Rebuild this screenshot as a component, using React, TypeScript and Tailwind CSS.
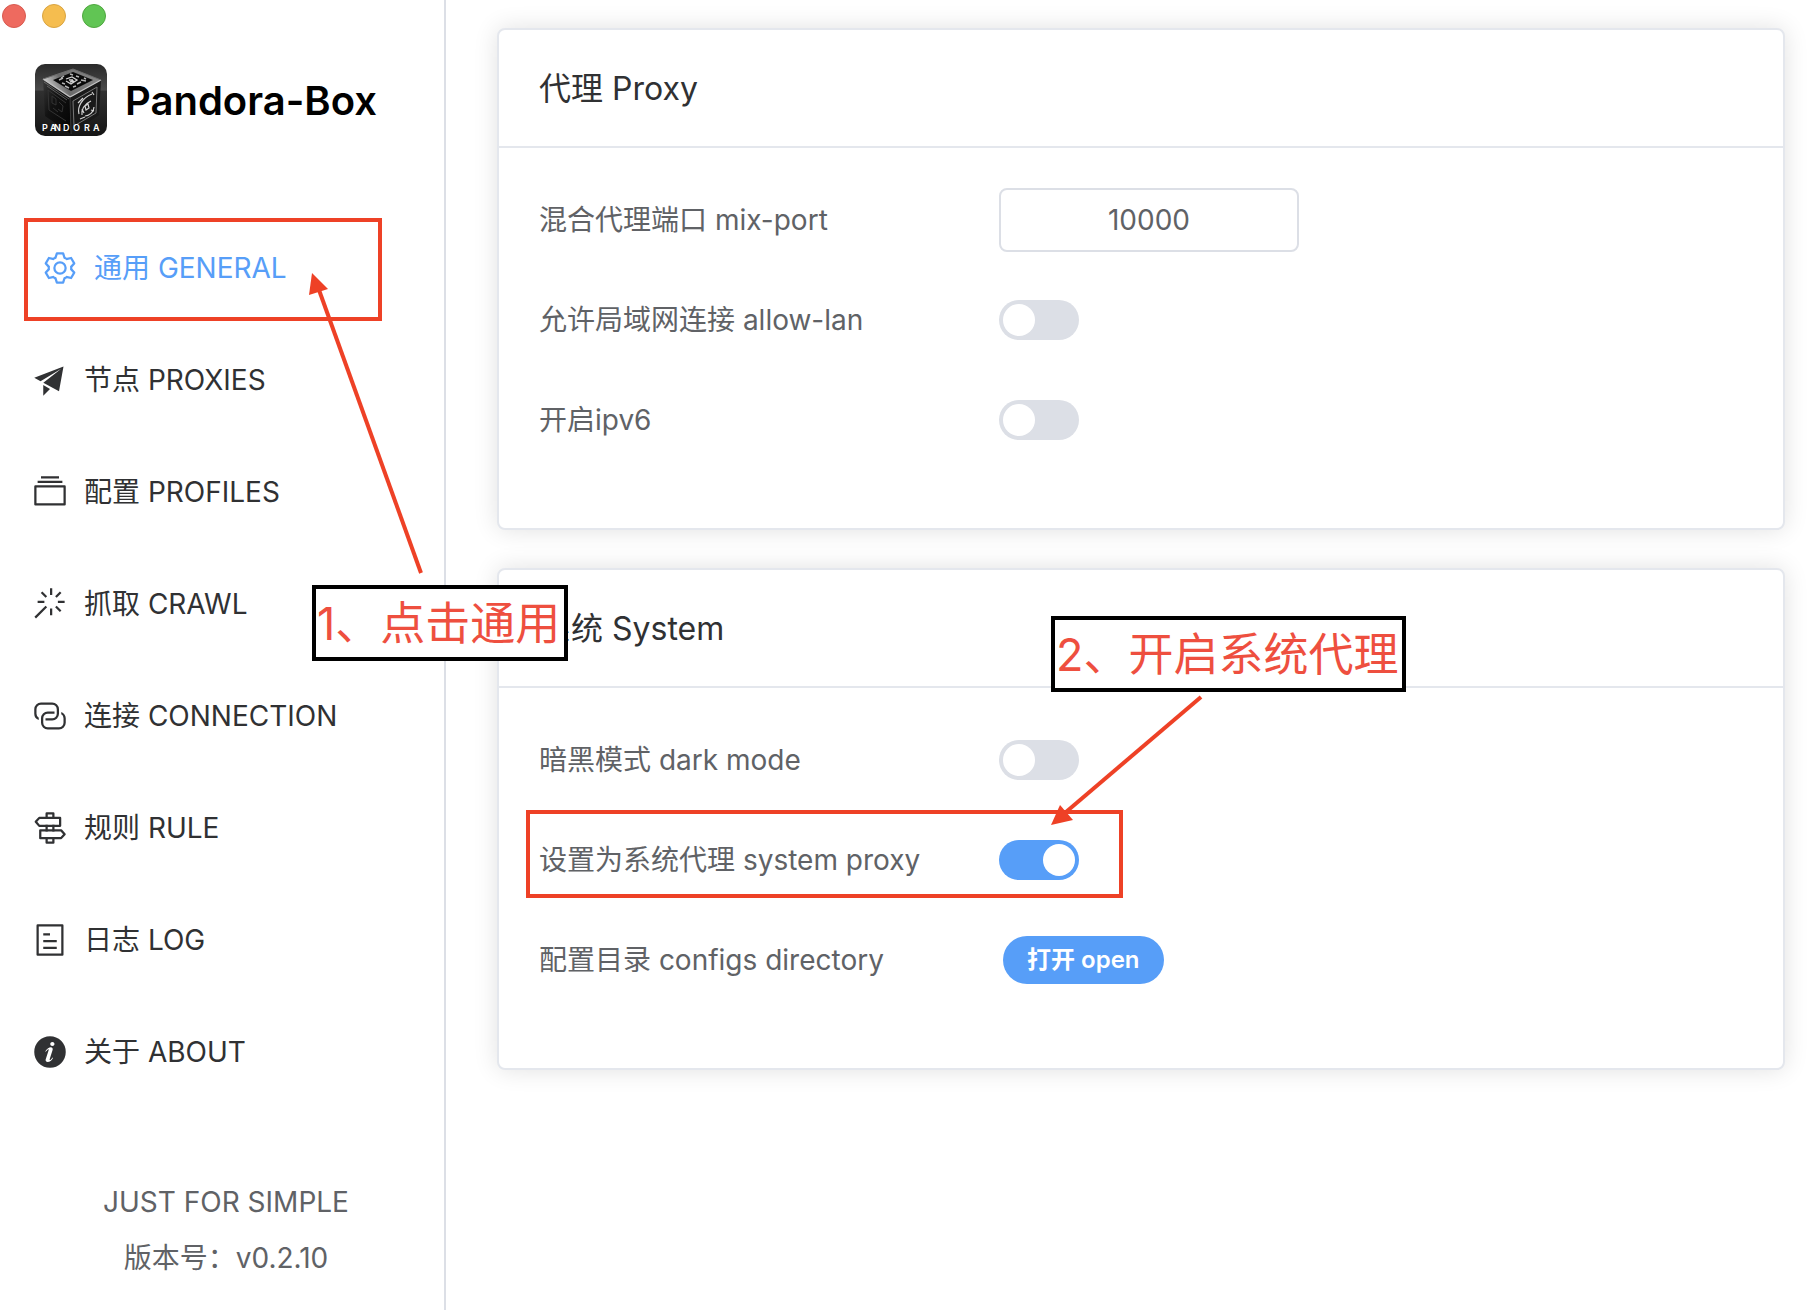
import { useState } from "react";

const ICONS = {
  setting: [
    "M600.704 64a32 32 0 0 1 30.464 22.208l35.2 109.376c14.784 7.232 28.928 15.36 42.432 24.512l112.384-24.192a32 32 0 0 1 34.432 15.36L944.32 364.8a32 32 0 0 1-4.032 37.504l-77.12 85.12a357.12 357.12 0 0 1 0 49.024l77.12 85.248a32 32 0 0 1 4.032 37.504l-88.704 153.6a32 32 0 0 1-34.432 15.296L708.8 803.904c-13.44 9.088-27.648 17.28-42.368 24.512l-35.264 109.376A32 32 0 0 1 600.704 960H423.296a32 32 0 0 1-30.464-22.208L357.696 828.48a351.616 351.616 0 0 1-42.56-24.64l-112.32 24.256a32 32 0 0 1-34.432-15.36L79.68 659.2a32 32 0 0 1 4.032-37.504l77.12-85.248a357.12 357.12 0 0 1 0-48.896l-77.12-85.248A32 32 0 0 1 79.68 364.8l88.704-153.6a32 32 0 0 1 34.432-15.296l112.32 24.256c13.568-9.152 27.776-17.408 42.56-24.64l35.2-109.312A32 32 0 0 1 423.232 64H600.64zm-23.424 64H446.72l-36.352 113.088-24.512 11.968a294.113 294.113 0 0 0-34.816 20.096l-22.656 15.36-116.224-25.088-65.28 113.152 79.68 88.192-1.92 27.136a293.12 293.12 0 0 0 0 40.192l1.92 27.136-79.808 88.192 65.344 113.152 116.224-25.024 22.656 15.296a294.113 294.113 0 0 0 34.816 20.096l24.512 11.968L446.72 896h130.688l36.48-113.152 24.448-11.904a288.282 288.282 0 0 0 34.752-20.096l22.592-15.296 116.288 25.024 65.28-113.152-79.744-88.192 1.92-27.136a293.12 293.12 0 0 0 0-40.256l-1.92-27.136 79.808-88.128-65.344-113.152-116.288 24.96-22.592-15.232a287.616 287.616 0 0 0-34.752-20.096l-24.448-11.904L577.344 128zM512 320a192 192 0 1 1 0 384 192 192 0 0 1 0-384zm0 64a128 128 0 1 0 0 256 128 128 0 0 0 0-256z",
  ],
  promotion: [
    "m64 448 832-320-128 704-446.08-243.328L832 192 242.816 545.472 64 448zm256 512V657.024L512 768 320 960z",
  ],
  files: [
    "M128 384v448h768V384H128zm-32-64h832a32 32 0 0 1 32 32v512a32 32 0 0 1-32 32H96a32 32 0 0 1-32-32V352a32 32 0 0 1 32-32zm64-128h704v64H160zm96-128h512v64H256z",
  ],
  magic: [
    "M512 64h64v192h-64V64zm0 576h64v192h-64V640zM160 480v-64h192v64H160zm576 0v-64h192v64H736zM249.856 199.04l45.248-45.184L430.848 289.6 385.6 334.848 249.856 199.104zM657.152 606.4l45.248-45.248 135.744 135.744-45.248 45.248L657.152 606.4zM114.048 923.2 68.8 877.952l316.8-316.8 45.248 45.248-316.8 316.8zM702.4 334.848 657.152 289.6l135.744-135.744 45.248 45.248L702.4 334.848z",
  ],
  connection: [
    "M640 384v64H448a128 128 0 0 0-128 128v128a128 128 0 0 0 128 128h320a128 128 0 0 0 128-128V576a128 128 0 0 0-64-110.848V394.88c74.56 26.368 128 97.472 128 181.056v128a192 192 0 0 1-192 192H448a192 192 0 0 1-192-192V576a192 192 0 0 1 192-192h192z",
    "M384 640v-64h192a128 128 0 0 0 128-128V320a128 128 0 0 0-128-128H256a128 128 0 0 0-128 128v128a128 128 0 0 0 64 110.848v70.272A192.064 192.064 0 0 1 64 448V320a192 192 0 0 1 192-192h320a192 192 0 0 1 192 192v128a192 192 0 0 1-192 192H384z",
  ],
  guide: [
    "M640 608h-64V416h64v192zm0 160v160a32 32 0 0 1-32 32H416a32 32 0 0 1-32-32V768h64v128h128V768h64zM384 608V416h64v192h-64zm256-352h-64V128H448v128h-64V96a32 32 0 0 1 32-32h192a32 32 0 0 1 32 32v160z",
    "m220.8 256-71.232 80 71.168 80H768V256H220.8zm-14.4-64H800a32 32 0 0 1 32 32v224a32 32 0 0 1-32 32H206.4a32 32 0 0 1-23.936-10.752l-99.584-112a32 32 0 0 1 0-42.496l99.584-112A32 32 0 0 1 206.4 192zm678.784 496-71.104 80H266.816V608h547.2l71.168 80zm-56.768-144H234.88a32 32 0 0 0-32 32v224a32 32 0 0 0 32 32h593.6a32 32 0 0 0 23.936-10.752l99.584-112a32 32 0 0 0 0-42.496l-99.584-112A32 32 0 0 0 828.48 544z",
  ],
  tickets: [
    "M192 128v768h640V128H192zm-32-64h704a32 32 0 0 1 32 32v832a32 32 0 0 1-32 32H160a32 32 0 0 1-32-32V96a32 32 0 0 1 32-32zm160 448h384v64H320v-64zm0-192h192v64H320v-64zm0 384h384v64H320v-64z",
  ],
  info: [
    "M512 64a448 448 0 1 1 0 896.064A448 448 0 0 1 512 64zm67.2 275.072c33.28 0 60.288-23.104 60.288-57.344s-27.072-57.344-60.288-57.344c-33.28 0-60.16 23.104-60.16 57.344s26.88 57.344 60.16 57.344zM590.912 699.2c0-6.848 2.368-24.64 1.024-34.752l-52.608 60.544c-10.88 11.456-24.512 19.392-30.912 17.28a12.992 12.992 0 0 1-8.256-14.72l87.68-276.992c7.168-35.136-12.544-67.2-54.336-71.296-44.096 0-108.992 44.736-148.48 101.504 0 6.784-1.28 23.68.064 33.792l52.544-60.608c10.88-11.328 23.552-19.328 29.952-17.152a12.8 12.8 0 0 1 7.808 16.128L388.48 728.576c-10.048 32.256 8.96 63.872 55.04 71.04 67.84 0 107.904-43.648 147.456-100.416z",
  ],
};

type IconName = keyof typeof ICONS;

const NAV: { icon: IconName; label: string; active?: boolean }[] = [
  { icon: "setting", label: "通用 GENERAL", active: true },
  { icon: "promotion", label: "节点 PROXIES" },
  { icon: "files", label: "配置 PROFILES" },
  { icon: "magic", label: "抓取 CRAWL" },
  { icon: "connection", label: "连接 CONNECTION" },
  { icon: "guide", label: "规则 RULE" },
  { icon: "tickets", label: "日志 LOG" },
  { icon: "info", label: "关于 ABOUT" },
];

function Icon({ name }: { name: IconName }) {
  return (
    <svg viewBox="0 0 1024 1024" className="size-9 shrink-0" fill="currentColor" aria-hidden="true">
      {ICONS[name].map((d) => (
        <path key={d} d={d} />
      ))}
    </svg>
  );
}

function Logo() {
  return (
    <svg viewBox="0 0 72 72" className="size-[72px] shrink-0 rounded-[10px]" role="img" aria-label="Pandora logo">
      <defs>
        <linearGradient id="bg" x1="0" y1="0" x2="0" y2="1">
          <stop offset="0" stopColor="#2a2a2a" />
          <stop offset="0.36" stopColor="#4a4a4a" />
          <stop offset="0.38" stopColor="#303030" />
          <stop offset="1" stopColor="#151515" />
        </linearGradient>
        <linearGradient id="top" x1="0" y1="0.6" x2="1" y2="0.3">
          <stop offset="0" stopColor="#e4e4e4" />
          <stop offset="0.35" stopColor="#6a6a6a" />
          <stop offset="1" stopColor="#8a8a8a" />
        </linearGradient>
        <linearGradient id="left" x1="0" y1="0" x2="1" y2="1">
          <stop offset="0" stopColor="#3a3a3a" />
          <stop offset="0.4" stopColor="#121212" />
          <stop offset="1" stopColor="#030303" />
        </linearGradient>
      </defs>
      <rect width="72" height="72" fill="url(#bg)" />
      <path d="M8 15 35 33 36 70 10 52Z" fill="url(#left)" />
      <path d="M66 16 35 33 36 70 64 51Z" fill="#191919" />
      <path d="M38 5 66 16 35 33 8 15Z" fill="url(#top)" />
      <path d="M38 8 58 16 36 27 18 16Z" fill="#0a0a0a" />
      <path d="M8 15 35 33 66 16" fill="none" stroke="#c4c4c4" strokeWidth="1.2" />
      <path d="M38 5 8 15M38 5 66 16" fill="none" stroke="#6c6c6c" />
      <path d="M9 18 34 35M12 22 32 36" fill="none" stroke="#8b8b8b" strokeWidth="0.6" />
      <path d="M31 15 37 13 42 16 36 20 31 17M34 16h4M35 18l4-1" fill="none" stroke="#d0d0d0" strokeWidth="1.3" />
      <path
        d="M24 16l4-2M27 19l3 1M30 22l4 2M42 20l4-2M46 16l5 1M35 10l3 1M41 12l3 1M38 23l3-1M26 14l3-2M49 14l2 1"
        stroke="#b4b4b4"
        strokeWidth="1.4"
      />
      <path d="M38 37 62 23 61 49 39 62Z" fill="none" stroke="#777" strokeWidth="1" />
      <path
        d="M44 50c-2-7 3-16 13-20M47 51c-1-5 2-11 9-14M50 52c4 0 9-4 9-9M43 39l5-5M50 42l3-2 1 4-3 2zM45 55l5-2M57 28l2 3M56 46l3 1M47 45l2 4"
        fill="none"
        stroke="#d2d2d2"
        strokeWidth="1.2"
      />
      <path
        d="M13 26 31 39M13 26 14 46 31 57M17 32l4 3v6l-4-2zM24 38l4 4-1 6-4-3M18 44l5 4"
        fill="none"
        stroke="#333"
        strokeWidth="1"
      />
      <path d="M35 33 36 70" stroke="#444" strokeWidth="0.8" />
      <text x="7 15 19 28 38 49 58" y="67" fill="#fff" fontSize="9" fontWeight="600" fontFamily="Inter, sans-serif">
        PANDORA
      </text>
    </svg>
  );
}

function Switch({ id, initial = false }: { id: string; initial?: boolean }) {
  const [on, setOn] = useState(initial);
  return (
    <input
      id={id}
      type="checkbox"
      role="switch"
      checked={on}
      onChange={() => setOn(!on)}
      className="flex h-10 w-20 cursor-pointer appearance-none items-center rounded-full bg-[#dcdfe6] px-1 before:size-8 before:rounded-full before:bg-white checked:justify-end checked:bg-[#579ef8]"
    />
  );
}

function Card({ title, children }: { title: string; children: React.ReactNode }) {
  return (
    <section className="rounded-lg border-2 border-[#e4e7ed] bg-white shadow-[0_0_24px_rgba(0,0,0,0.12)]">
      <h2 className="border-b-2 border-[#e4e7ed] px-10 pt-[37px] pb-[35px] text-[32px] leading-[44px] text-[#303133]">
        {title}
      </h2>
      <div className="flex flex-col gap-9 px-10 pt-10 pb-[76px]">{children}</div>
    </section>
  );
}

function Row({ id, label, children }: { id: string; label: string; children: React.ReactNode }) {
  return (
    <div className="flex h-16 items-center">
      <label htmlFor={id} className="w-[460px] shrink-0">
        {label}
      </label>
      {children}
    </div>
  );
}

export default function App() {
  const [port, setPort] = useState("10000");
  return (
    <div className="relative flex min-h-screen bg-white font-['Inter','Noto_Sans_CJK_SC',sans-serif] text-[28px] leading-[56px] text-[#606266]">
      <aside className="flex w-[446px] shrink-0 flex-col border-r-2 border-[#dcdfe6]">
        <div className="flex gap-4 pt-1 pl-0.5">
          <button aria-label="Close" className="size-6 rounded-full border border-[#d85a50] bg-[#ee6a5f]" />
          <button aria-label="Minimize" className="size-6 rounded-full border border-[#d9a441] bg-[#f5bd4f]" />
          <button aria-label="Zoom" className="size-6 rounded-full border border-[#4fa73f] bg-[#61c554]" />
        </div>
        <div className="mt-9 flex items-center gap-[18px] pl-[35px]">
          <Logo />
          <h1 className="pt-0.5 text-[40px] font-semibold text-black">Pandora-Box</h1>
        </div>
        <nav className="mt-[76px] flex flex-col">
          {NAV.map((item) => (
            <a
              key={item.icon}
              href="#"
              aria-current={item.active ? "page" : undefined}
              className={
                item.active
                  ? "flex h-28 items-center gap-4 pl-[42px] text-[#579ef8]"
                  : "flex h-28 items-center gap-4 pl-8 text-[#303133]"
              }
            >
              <Icon name={item.icon} />
              {item.label}
            </a>
          ))}
        </nav>
        <footer className="mt-auto pb-6 pl-2 text-center">
          <p>JUST FOR SIMPLE</p>
          <p>版本号：v0.2.10</p>
        </footer>
      </aside>

      <main className="flex min-w-0 flex-1 flex-col gap-[38px] pt-7 pr-[29px] pl-[51px]">
        <Card title="代理 Proxy">
          <Row id="mix-port" label="混合代理端口 mix-port">
            <input
              id="mix-port"
              type="text"
              value={port}
              onChange={(e) => setPort(e.target.value)}
              className="h-16 w-[300px] rounded-lg border-2 border-[#dcdfe6] bg-white text-center"
            />
          </Row>
          <Row id="allow-lan" label="允许局域网连接 allow-lan">
            <Switch id="allow-lan" />
          </Row>
          <Row id="ipv6" label="开启ipv6">
            <Switch id="ipv6" />
          </Row>
        </Card>
        <Card title="系统 System">
          <Row id="dark" label="暗黑模式 dark mode">
            <Switch id="dark" />
          </Row>
          <Row id="system-proxy" label="设置为系统代理 system proxy">
            <Switch id="system-proxy" initial />
          </Row>
          <Row id="open" label="配置目录 configs directory">
            <button
              id="open"
              className="ml-1 flex h-12 items-center rounded-full bg-[#579ef8] px-6 text-2xl font-semibold text-white"
            >
              打开 open
            </button>
          </Row>
        </Card>
      </main>

      <div className="pointer-events-none absolute top-[218px] left-6 h-[103px] w-[358px] border-4 border-[#ee4126]" />
      <div className="pointer-events-none absolute top-[810px] left-[526px] h-[88px] w-[597px] border-4 border-[#ee4126]" />
      <div className="absolute top-[585px] left-[312px] flex h-[76px] w-[256px] items-center border-4 border-black bg-white pt-0.5 pl-px text-[45px] whitespace-nowrap text-[#ee4f3f]">
        1、点击通用
      </div>
      <div className="absolute top-[616px] left-[1051px] flex h-[76px] w-[355px] items-center border-4 border-black bg-white pt-0.5 pl-px text-[45px] whitespace-nowrap text-[#ee4f3f]">
        2、开启系统代理
      </div>
      <svg
        className="pointer-events-none absolute top-0 left-0 h-[900px] w-[1300px]"
        viewBox="0 0 1300 900"
        fill="#ee4126"
        stroke="none"
        aria-hidden="true"
      >
        <path d="M421 573 319 290" stroke="#ee4126" strokeWidth="4" />
        <path d="M312 273 328 289 309 295Z" />
        <path d="M1201 697 1066 812" stroke="#ee4126" strokeWidth="4" />
        <path d="M1051 825 1060 805 1073 820Z" />
      </svg>
    </div>
  );
}
